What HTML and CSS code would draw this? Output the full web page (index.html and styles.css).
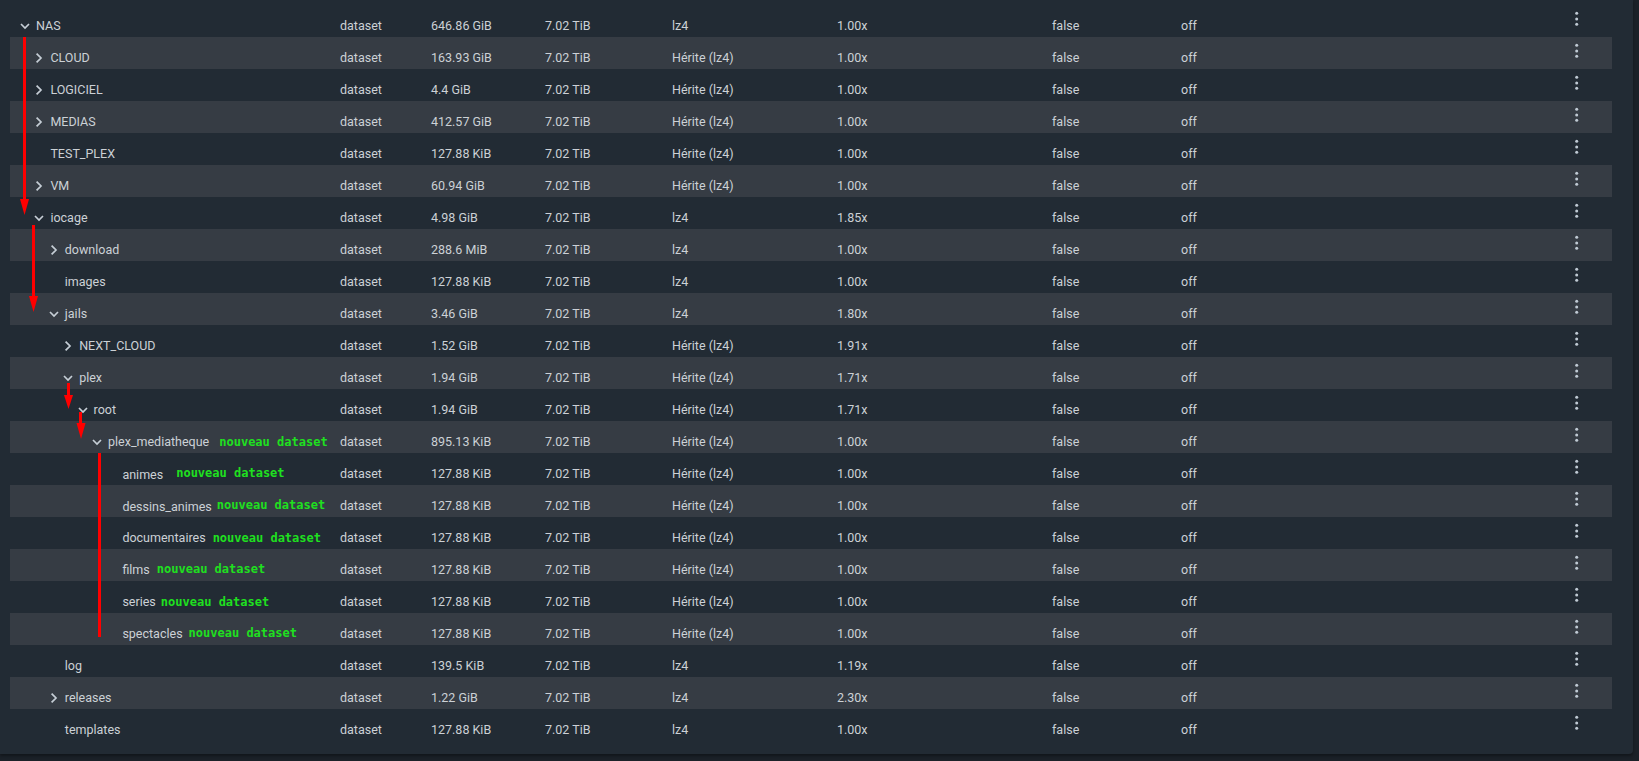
FILE: index.html
```html
<!DOCTYPE html>
<html lang="fr">
<head>
<meta charset="utf-8">
<title>Pools</title>
<link rel="stylesheet" href="styles.css">
</head>
<body>
<div class="card">
  <div class="tree">
    <div class="row"><div class="name l0"><span class="chev"><svg viewBox="0 0 10 10" width="10" height="10"><path d="M1 3 L5 7 L9 3"/></svg></span><span class="label">NAS</span></div><div>dataset</div><div>646.86 GiB</div><div>7.02 TiB</div><div>lz4</div><div>1.00x</div><div>false</div><div>off</div><div class="act"><svg viewBox="0 0 4 16" width="4" height="16"><circle cx="1.7" cy="2.3" r="1.5"/><circle cx="1.7" cy="8" r="1.5"/><circle cx="1.7" cy="13.3" r="1.5"/></svg></div></div>
    <div class="row"><div class="name l1"><span class="chev"><svg viewBox="0 0 10 10" width="10" height="10"><path d="M2.6 0.6 L7 5 L2.6 9.4"/></svg></span><span class="label">CLOUD</span></div><div>dataset</div><div>163.93 GiB</div><div>7.02 TiB</div><div>Hérite (lz4)</div><div>1.00x</div><div>false</div><div>off</div><div class="act"><svg viewBox="0 0 4 16" width="4" height="16"><circle cx="1.7" cy="2.3" r="1.5"/><circle cx="1.7" cy="8" r="1.5"/><circle cx="1.7" cy="13.3" r="1.5"/></svg></div></div>
    <div class="row"><div class="name l1"><span class="chev"><svg viewBox="0 0 10 10" width="10" height="10"><path d="M2.6 0.6 L7 5 L2.6 9.4"/></svg></span><span class="label">LOGICIEL</span></div><div>dataset</div><div>4.4 GiB</div><div>7.02 TiB</div><div>Hérite (lz4)</div><div>1.00x</div><div>false</div><div>off</div><div class="act"><svg viewBox="0 0 4 16" width="4" height="16"><circle cx="1.7" cy="2.3" r="1.5"/><circle cx="1.7" cy="8" r="1.5"/><circle cx="1.7" cy="13.3" r="1.5"/></svg></div></div>
    <div class="row"><div class="name l1"><span class="chev"><svg viewBox="0 0 10 10" width="10" height="10"><path d="M2.6 0.6 L7 5 L2.6 9.4"/></svg></span><span class="label">MEDIAS</span></div><div>dataset</div><div>412.57 GiB</div><div>7.02 TiB</div><div>Hérite (lz4)</div><div>1.00x</div><div>false</div><div>off</div><div class="act"><svg viewBox="0 0 4 16" width="4" height="16"><circle cx="1.7" cy="2.3" r="1.5"/><circle cx="1.7" cy="8" r="1.5"/><circle cx="1.7" cy="13.3" r="1.5"/></svg></div></div>
    <div class="row"><div class="name l1"><span class="chev"></span><span class="label">TEST_PLEX</span></div><div>dataset</div><div>127.88 KiB</div><div>7.02 TiB</div><div>Hérite (lz4)</div><div>1.00x</div><div>false</div><div>off</div><div class="act"><svg viewBox="0 0 4 16" width="4" height="16"><circle cx="1.7" cy="2.3" r="1.5"/><circle cx="1.7" cy="8" r="1.5"/><circle cx="1.7" cy="13.3" r="1.5"/></svg></div></div>
    <div class="row"><div class="name l1"><span class="chev"><svg viewBox="0 0 10 10" width="10" height="10"><path d="M2.6 0.6 L7 5 L2.6 9.4"/></svg></span><span class="label">VM</span></div><div>dataset</div><div>60.94 GiB</div><div>7.02 TiB</div><div>Hérite (lz4)</div><div>1.00x</div><div>false</div><div>off</div><div class="act"><svg viewBox="0 0 4 16" width="4" height="16"><circle cx="1.7" cy="2.3" r="1.5"/><circle cx="1.7" cy="8" r="1.5"/><circle cx="1.7" cy="13.3" r="1.5"/></svg></div></div>
    <div class="row"><div class="name l1"><span class="chev"><svg viewBox="0 0 10 10" width="10" height="10"><path d="M1 3 L5 7 L9 3"/></svg></span><span class="label">iocage</span></div><div>dataset</div><div>4.98 GiB</div><div>7.02 TiB</div><div>lz4</div><div>1.85x</div><div>false</div><div>off</div><div class="act"><svg viewBox="0 0 4 16" width="4" height="16"><circle cx="1.7" cy="2.3" r="1.5"/><circle cx="1.7" cy="8" r="1.5"/><circle cx="1.7" cy="13.3" r="1.5"/></svg></div></div>
    <div class="row"><div class="name l2"><span class="chev"><svg viewBox="0 0 10 10" width="10" height="10"><path d="M2.6 0.6 L7 5 L2.6 9.4"/></svg></span><span class="label">download</span></div><div>dataset</div><div>288.6 MiB</div><div>7.02 TiB</div><div>lz4</div><div>1.00x</div><div>false</div><div>off</div><div class="act"><svg viewBox="0 0 4 16" width="4" height="16"><circle cx="1.7" cy="2.3" r="1.5"/><circle cx="1.7" cy="8" r="1.5"/><circle cx="1.7" cy="13.3" r="1.5"/></svg></div></div>
    <div class="row"><div class="name l2"><span class="chev"></span><span class="label">images</span></div><div>dataset</div><div>127.88 KiB</div><div>7.02 TiB</div><div>lz4</div><div>1.00x</div><div>false</div><div>off</div><div class="act"><svg viewBox="0 0 4 16" width="4" height="16"><circle cx="1.7" cy="2.3" r="1.5"/><circle cx="1.7" cy="8" r="1.5"/><circle cx="1.7" cy="13.3" r="1.5"/></svg></div></div>
    <div class="row"><div class="name l2"><span class="chev"><svg viewBox="0 0 10 10" width="10" height="10"><path d="M1 3 L5 7 L9 3"/></svg></span><span class="label">jails</span></div><div>dataset</div><div>3.46 GiB</div><div>7.02 TiB</div><div>lz4</div><div>1.80x</div><div>false</div><div>off</div><div class="act"><svg viewBox="0 0 4 16" width="4" height="16"><circle cx="1.7" cy="2.3" r="1.5"/><circle cx="1.7" cy="8" r="1.5"/><circle cx="1.7" cy="13.3" r="1.5"/></svg></div></div>
    <div class="row"><div class="name l3"><span class="chev"><svg viewBox="0 0 10 10" width="10" height="10"><path d="M2.6 0.6 L7 5 L2.6 9.4"/></svg></span><span class="label">NEXT_CLOUD</span></div><div>dataset</div><div>1.52 GiB</div><div>7.02 TiB</div><div>Hérite (lz4)</div><div>1.91x</div><div>false</div><div>off</div><div class="act"><svg viewBox="0 0 4 16" width="4" height="16"><circle cx="1.7" cy="2.3" r="1.5"/><circle cx="1.7" cy="8" r="1.5"/><circle cx="1.7" cy="13.3" r="1.5"/></svg></div></div>
    <div class="row"><div class="name l3"><span class="chev"><svg viewBox="0 0 10 10" width="10" height="10"><path d="M1 3 L5 7 L9 3"/></svg></span><span class="label">plex</span></div><div>dataset</div><div>1.94 GiB</div><div>7.02 TiB</div><div>Hérite (lz4)</div><div>1.71x</div><div>false</div><div>off</div><div class="act"><svg viewBox="0 0 4 16" width="4" height="16"><circle cx="1.7" cy="2.3" r="1.5"/><circle cx="1.7" cy="8" r="1.5"/><circle cx="1.7" cy="13.3" r="1.5"/></svg></div></div>
    <div class="row"><div class="name l4"><span class="chev"><svg viewBox="0 0 10 10" width="10" height="10"><path d="M1 3 L5 7 L9 3"/></svg></span><span class="label">root</span></div><div>dataset</div><div>1.94 GiB</div><div>7.02 TiB</div><div>Hérite (lz4)</div><div>1.71x</div><div>false</div><div>off</div><div class="act"><svg viewBox="0 0 4 16" width="4" height="16"><circle cx="1.7" cy="2.3" r="1.5"/><circle cx="1.7" cy="8" r="1.5"/><circle cx="1.7" cy="13.3" r="1.5"/></svg></div></div>
    <div class="row"><div class="name l5"><span class="chev"><svg viewBox="0 0 10 10" width="10" height="10"><path d="M1 3 L5 7 L9 3"/></svg></span><span class="label">plex_mediatheque<span class="tag g10">nouveau dataset</span></span></div><div>dataset</div><div>895.13 KiB</div><div>7.02 TiB</div><div>Hérite (lz4)</div><div>1.00x</div><div>false</div><div>off</div><div class="act"><svg viewBox="0 0 4 16" width="4" height="16"><circle cx="1.7" cy="2.3" r="1.5"/><circle cx="1.7" cy="8" r="1.5"/><circle cx="1.7" cy="13.3" r="1.5"/></svg></div></div>
    <div class="row"><div class="name l6"><span class="chev"></span><span class="label">animes<span class="tag g13 up2">nouveau dataset</span></span></div><div>dataset</div><div>127.88 KiB</div><div>7.02 TiB</div><div>Hérite (lz4)</div><div>1.00x</div><div>false</div><div>off</div><div class="act"><svg viewBox="0 0 4 16" width="4" height="16"><circle cx="1.7" cy="2.3" r="1.5"/><circle cx="1.7" cy="8" r="1.5"/><circle cx="1.7" cy="13.3" r="1.5"/></svg></div></div>
    <div class="row"><div class="name l6"><span class="chev"></span><span class="label">dessins_animes<span class="tag g5 up2">nouveau dataset</span></span></div><div>dataset</div><div>127.88 KiB</div><div>7.02 TiB</div><div>Hérite (lz4)</div><div>1.00x</div><div>false</div><div>off</div><div class="act"><svg viewBox="0 0 4 16" width="4" height="16"><circle cx="1.7" cy="2.3" r="1.5"/><circle cx="1.7" cy="8" r="1.5"/><circle cx="1.7" cy="13.3" r="1.5"/></svg></div></div>
    <div class="row"><div class="name l6"><span class="chev"></span><span class="label">documentaires<span class="tag g7">nouveau dataset</span></span></div><div>dataset</div><div>127.88 KiB</div><div>7.02 TiB</div><div>Hérite (lz4)</div><div>1.00x</div><div>false</div><div>off</div><div class="act"><svg viewBox="0 0 4 16" width="4" height="16"><circle cx="1.7" cy="2.3" r="1.5"/><circle cx="1.7" cy="8" r="1.5"/><circle cx="1.7" cy="13.3" r="1.5"/></svg></div></div>
    <div class="row"><div class="name l6"><span class="chev"></span><span class="label">films<span class="tag g7 up1">nouveau dataset</span></span></div><div>dataset</div><div>127.88 KiB</div><div>7.02 TiB</div><div>Hérite (lz4)</div><div>1.00x</div><div>false</div><div>off</div><div class="act"><svg viewBox="0 0 4 16" width="4" height="16"><circle cx="1.7" cy="2.3" r="1.5"/><circle cx="1.7" cy="8" r="1.5"/><circle cx="1.7" cy="13.3" r="1.5"/></svg></div></div>
    <div class="row"><div class="name l6"><span class="chev"></span><span class="label">series<span class="tag g5">nouveau dataset</span></span></div><div>dataset</div><div>127.88 KiB</div><div>7.02 TiB</div><div>Hérite (lz4)</div><div>1.00x</div><div>false</div><div>off</div><div class="act"><svg viewBox="0 0 4 16" width="4" height="16"><circle cx="1.7" cy="2.3" r="1.5"/><circle cx="1.7" cy="8" r="1.5"/><circle cx="1.7" cy="13.3" r="1.5"/></svg></div></div>
    <div class="row"><div class="name l6"><span class="chev"></span><span class="label">spectacles<span class="tag g6 up1">nouveau dataset</span></span></div><div>dataset</div><div>127.88 KiB</div><div>7.02 TiB</div><div>Hérite (lz4)</div><div>1.00x</div><div>false</div><div>off</div><div class="act"><svg viewBox="0 0 4 16" width="4" height="16"><circle cx="1.7" cy="2.3" r="1.5"/><circle cx="1.7" cy="8" r="1.5"/><circle cx="1.7" cy="13.3" r="1.5"/></svg></div></div>
    <div class="row"><div class="name l2"><span class="chev"></span><span class="label">log</span></div><div>dataset</div><div>139.5 KiB</div><div>7.02 TiB</div><div>lz4</div><div>1.19x</div><div>false</div><div>off</div><div class="act"><svg viewBox="0 0 4 16" width="4" height="16"><circle cx="1.7" cy="2.3" r="1.5"/><circle cx="1.7" cy="8" r="1.5"/><circle cx="1.7" cy="13.3" r="1.5"/></svg></div></div>
    <div class="row"><div class="name l2"><span class="chev"><svg viewBox="0 0 10 10" width="10" height="10"><path d="M2.6 0.6 L7 5 L2.6 9.4"/></svg></span><span class="label">releases</span></div><div>dataset</div><div>1.22 GiB</div><div>7.02 TiB</div><div>lz4</div><div>2.30x</div><div>false</div><div>off</div><div class="act"><svg viewBox="0 0 4 16" width="4" height="16"><circle cx="1.7" cy="2.3" r="1.5"/><circle cx="1.7" cy="8" r="1.5"/><circle cx="1.7" cy="13.3" r="1.5"/></svg></div></div>
    <div class="row"><div class="name l2"><span class="chev"></span><span class="label">templates</span></div><div>dataset</div><div>127.88 KiB</div><div>7.02 TiB</div><div>lz4</div><div>1.00x</div><div>false</div><div>off</div><div class="act"><svg viewBox="0 0 4 16" width="4" height="16"><circle cx="1.7" cy="2.3" r="1.5"/><circle cx="1.7" cy="8" r="1.5"/><circle cx="1.7" cy="13.3" r="1.5"/></svg></div></div>
  </div>
  <svg class="marks" viewBox="0 0 200 761" width="200" height="761">
    <rect x="23" y="37" width="3" height="164"/>
    <polygon points="20,199 29,199 24.5,215"/>
    <rect x="32" y="225" width="3" height="73"/>
    <polygon points="29,296 38,296 33.5,312"/>
    <rect x="67" y="383" width="3" height="14"/>
    <polygon points="64,395 73,395 68.5,409"/>
    <rect x="79" y="412" width="3" height="12"/>
    <polygon points="76.5,423 85.5,423 81,439"/>
    <rect x="98" y="453" width="3" height="184"/>
  </svg>
</div>
</body>
</html>
```

FILE: styles.css
```css
html, body {
  margin: 0;
  padding: 0;
  background: #1b2128;
}

body {
  width: 1639px;
  height: 761px;
  overflow: hidden;
  font-family: Roboto, "Noto Sans", "Liberation Sans", sans-serif;
  font-size: 12.5px;
  color: #ccd1d6;
}

.card {
  position: relative;
  box-sizing: border-box;
  width: 1633px;
  height: 754px;
  padding: 5px 0 0 10px;
  background: #222b34;
  border-bottom-right-radius: 4px;
  box-shadow: 0 2px 3px rgba(0, 0, 0, 0.35);
}

.tree {
  width: 1602px;
  display: flex;
  flex-direction: column;
}

.row {
  box-sizing: border-box;
  height: 32px;
  padding-top: 9px;
  line-height: 23px;
  display: grid;
  grid-template-columns: 330px 91px 114px 127px 165px 215px 129px 394px 1fr;
  align-items: start;
  white-space: nowrap;
}

.row:nth-child(even) {
  background: #363c44;
}

.name {
  display: flex;
  align-items: center;
  height: 23px;
}

.l0 { padding-left: 10px; }
.l1 { padding-left: 24.4px; }
.l2 { padding-left: 38.8px; }
.l3 { padding-left: 53.2px; }
.l4 { padding-left: 67.6px; }
.l5 { padding-left: 82px; }
.l6 { padding-left: 96.4px; }

.chev {
  flex: 0 0 16px;
  width: 16px;
  height: 10px;
  display: flex;
  align-items: center;
}

.chev svg {
  display: block;
  fill: none;
  stroke: #c6ced6;
  stroke-width: 1.7;
}

.label {
  display: inline-block;
}

.tag {
  font-family: "DejaVu Sans Mono", "Liberation Mono", monospace;
  font-weight: bold;
  font-size: 12px;
  color: #1fe01f;
  letter-spacing: 0;
}

.g5 { margin-left: 5px; }
.g6 { margin-left: 6px; }
.g7 { margin-left: 7px; }
.g10 { margin-left: 10px; }
.g13 { margin-left: 13px; }

.up1 { vertical-align: 1px; }
.up2 { vertical-align: 2px; }

.act {
  margin-top: -3px;
  height: 16px;
}

.act svg {
  display: block;
  fill: #c0cad4;
}

.marks {
  position: absolute;
  left: 0;
  top: 0;
  fill: #ff0000;
  pointer-events: none;
}
```
